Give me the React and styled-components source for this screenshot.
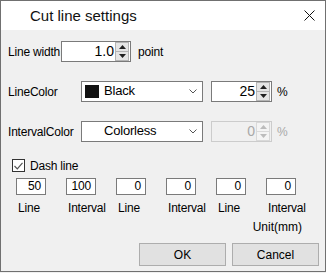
import React from 'react';
import styled, { createGlobalStyle } from 'styled-components';

const GlobalStyle = createGlobalStyle`
  html, body {
    margin: 0;
    padding: 0;
    background: #f0f0f0;
  }
  * {
    box-sizing: border-box;
  }
`;

const Window = styled.div`
  width: 326px;
  height: 272px;
  display: flex;
  flex-direction: column;
  border: 1px solid #707070;
  background: #f0f0f0;
  font-family: 'Liberation Sans', Arial, sans-serif;
  font-size: 12px;
  color: #000;
`;

const TitleBar = styled.div`
  height: 29px;
  flex: none;
  display: flex;
  align-items: center;
  justify-content: space-between;
  background: #fff;
  padding: 0 10px 0 29px;
`;

const Title = styled.div`
  font-size: 15px;
  font-weight: 400;
  line-height: 29px;
  color: #111;
`;

const Body = styled.div`
  flex: 1;
  display: flex;
  flex-direction: column;
  padding: 11px 6px 0 7px;
  letter-spacing: -0.2px;
`;

const FieldRow = styled.div`
  display: flex;
  align-items: center;
  height: 21px;
  margin-top: ${({ $gap }) => $gap || 0}px;
`;

const Label = styled.div`
  width: ${({ $w }) => $w}px;
  flex: none;
  white-space: nowrap;
`;

const Suffix = styled.div`
  margin-left: ${({ $gap }) => $gap}px;
  color: ${({ $disabled }) => ($disabled ? '#a8a8a8' : '#000')};
`;

const SpinBox = styled.div`
  width: ${({ $w }) => $w}px;
  height: 21px;
  flex: none;
  margin-left: ${({ $gap }) => $gap || 0}px;
  display: flex;
  align-items: stretch;
  border: 1px solid ${({ $disabled }) => ($disabled ? '#cccccc' : '#7a7a7a')};
  background: ${({ $disabled }) => ($disabled ? '#f0f0f0' : '#fff')};
  padding: 0 1px;
`;

const SpinValue = styled.div`
  flex: 1;
  text-align: right;
  padding-right: 1px;
  font-size: 14px;
  line-height: 19px;
  letter-spacing: 0;
  color: ${({ $disabled }) => ($disabled ? '#a8a8a8' : '#000')};
`;

const SpinButtons = styled.div`
  width: 14px;
  display: flex;
  flex-direction: column;
`;

const SpinButton = styled.div`
  flex: 1;
  display: flex;
  align-items: center;
  justify-content: center;
  background: ${({ $disabled }) => ($disabled ? '#f4f4f4' : '#e5e5e5')};
  border: 1px solid ${({ $disabled }) => ($disabled ? '#d9d9d9' : '#b4b4b4')};
  & + & {
    border-top: none;
  }
`;

const Arrow = ({ up, disabled }) => (
  <svg width="7" height="4" viewBox="0 0 7 4">
    <path
      d={up ? 'M0 4 L3.5 0 L7 4 Z' : 'M0 0 L3.5 4 L7 0 Z'}
      fill={disabled ? '#bcbcbc' : '#202020'}
    />
  </svg>
);

const Spin = ({ value, width, gap, disabled }) => (
  <SpinBox $w={width} $gap={gap} $disabled={disabled}>
    <SpinValue $disabled={disabled}>{value}</SpinValue>
    <SpinButtons>
      <SpinButton $disabled={disabled}>
        <Arrow up disabled={disabled} />
      </SpinButton>
      <SpinButton $disabled={disabled}>
        <Arrow disabled={disabled} />
      </SpinButton>
    </SpinButtons>
  </SpinBox>
);

const SelectBox = styled.div`
  width: 122px;
  height: 21px;
  flex: none;
  display: flex;
  align-items: center;
  border: 1px solid #7a7a7a;
  background: #fff;
  padding: 0 5px 0 3px;
`;

const Swatch = styled.div`
  width: 14px;
  height: 13px;
  flex: none;
  background: ${({ $color }) => $color};
`;

const SelectText = styled.div`
  flex: 1;
  margin-left: 5px;
  font-size: 13px;
  line-height: 17px;
  align-self: flex-start;
`;

const Chevron = () => (
  <svg width="8" height="5" viewBox="0 0 8 5">
    <path d="M0.5 0.5 L4 4 L7.5 0.5" fill="none" stroke="#555" strokeWidth="1" />
  </svg>
);

const CheckRow = styled.label`
  display: flex;
  align-items: center;
  margin: 17px 0 0 4px;
  height: 13px;
`;

const CheckBox = styled.div`
  width: 13px;
  height: 13px;
  border: 1px solid #333;
  background: #fff;
  display: flex;
  align-items: center;
  justify-content: center;
  margin-right: 5px;
`;

const DashGrid = styled.div`
  display: grid;
  grid-template-columns: repeat(6, 50px);
  grid-template-rows: 17px 14px;
  row-gap: 6px;
  margin: 6px 0 0 8px;
`;

const DashInput = styled.div`
  width: 30px;
  height: 17px;
  border: 1px solid #7a7a7a;
  background: #fff;
  text-align: right;
  padding-right: 4px;
  line-height: 15px;
`;

const DashLabel = styled.div`
  padding-left: 2px;
  line-height: 14px;
`;

const UnitNote = styled.div`
  align-self: flex-end;
  margin: 5px 17px 0 0;
  line-height: 14px;
  letter-spacing: 0;
`;

const ButtonRow = styled.div`
  display: flex;
  justify-content: flex-end;
  gap: 6px;
  margin-top: 9px;
`;

const Button = styled.button`
  width: 87px;
  height: 23px;
  border: 1px solid #adadad;
  background: #e1e1e1;
  font-family: inherit;
  font-size: 12px;
  color: #000;
  padding: 0;
`;

const dash = [
  { value: '50', label: 'Line' },
  { value: '100', label: 'Interval' },
  { value: '0', label: 'Line' },
  { value: '0', label: 'Interval' },
  { value: '0', label: 'Line' },
  { value: '0', label: 'Interval' },
];

export default function App() {
  return (
    <>
      <GlobalStyle />
      <Window>
        <TitleBar>
          <Title>Cut line settings</Title>
          <svg width="11" height="11" viewBox="0 0 11 11">
            <path d="M0.5 0.5 L10.5 10.5 M10.5 0.5 L0.5 10.5" stroke="#111" strokeWidth="1" />
          </svg>
        </TitleBar>
        <Body>
          <FieldRow>
            <Label $w={53}>Line width</Label>
            <Spin value="1.0" width={70} />
            <Suffix $gap={7}>point</Suffix>
          </FieldRow>

          <FieldRow $gap={19}>
            <Label $w={73}>LineColor</Label>
            <SelectBox>
              <Swatch $color="#111" />
              <SelectText>Black</SelectText>
              <Chevron />
            </SelectBox>
            <Spin value="25" width={61} gap={8} />
            <Suffix $gap={5}>%</Suffix>
          </FieldRow>

          <FieldRow $gap={19}>
            <Label $w={73}>IntervalColor</Label>
            <SelectBox>
              <Swatch $color="#fff" />
              <SelectText>Colorless</SelectText>
              <Chevron />
            </SelectBox>
            <Spin value="0" width={61} gap={8} disabled />
            <Suffix $gap={5} $disabled>%</Suffix>
          </FieldRow>

          <CheckRow>
            <CheckBox>
              <svg width="9" height="8" viewBox="0 0 9 8">
                <path d="M0.5 4 L3.3 6.8 L8.5 0.8" fill="none" stroke="#555" strokeWidth="1.2" />
              </svg>
            </CheckBox>
            Dash line
          </CheckRow>

          <DashGrid>
            {dash.map((d, i) => (
              <DashInput key={`v${i}`}>{d.value}</DashInput>
            ))}
            {dash.map((d, i) => (
              <DashLabel key={`l${i}`}>{d.label}</DashLabel>
            ))}
          </DashGrid>

          <UnitNote>Unit(mm)</UnitNote>

          <ButtonRow>
            <Button>OK</Button>
            <Button>Cancel</Button>
          </ButtonRow>
        </Body>
      </Window>
    </>
  );
}
